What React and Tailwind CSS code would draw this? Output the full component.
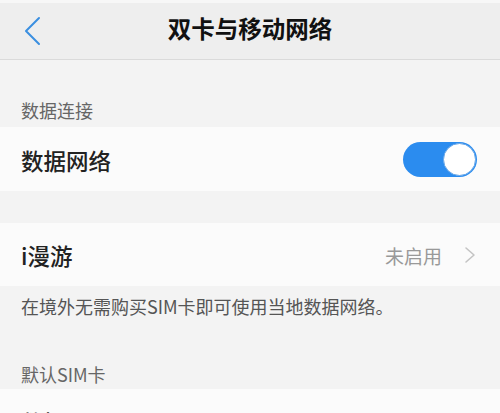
export default function App() {
  const font = { fontFamily: '"Noto Sans CJK SC", "Noto Sans", sans-serif' };
  return (
    <div className="w-[500px] h-[413px] overflow-hidden bg-[#f3f3f3]" style={font}>
      <div className="h-[3px] bg-[#f7f7f7]" />
      <header className="relative h-[57px] bg-[#eeeeee] border-b border-[#dadada] flex items-center justify-center pb-[4px]">
        <svg className="absolute left-[24px] top-[13px]" width="18" height="30" viewBox="0 0 18 30" fill="none">
          <polyline points="15,2 2,15 15,28" stroke="#3b8fe0" strokeWidth="2" strokeLinecap="round" strokeLinejoin="round" />
        </svg>
        <h1 className="text-[23.5px] font-bold text-[#111] leading-none">双卡与移动网络</h1>
      </header>

      <div className="h-[67px] flex items-end pb-[8px] px-[21px]">
        <span className="text-[18px] leading-[18px] text-[#666]">数据连接</span>
      </div>

      <div className="h-[64px] bg-[#fbfbfb] flex items-center justify-between pl-[21px] pr-[23px]">
        <span className="text-[22.5px] leading-none font-medium text-[#222] pt-[2px]">数据网络</span>
        <div className="relative w-[74px] h-[35px] rounded-full bg-[#2b8cef]">
          <div className="absolute right-[1px] top-[1px] w-[33px] h-[33px] rounded-full bg-white border border-[#6aa8e8]" />
        </div>
      </div>

      <div className="h-[32px]" />

      <div className="h-[63px] bg-[#fbfbfb] flex items-center justify-between pl-[21px] pr-[24px]">
        <span className="text-[22.5px] leading-none font-medium text-[#222] pt-[2px]">i漫游</span>
        <div className="flex items-center gap-[22px]">
          <span className="text-[19px] leading-none text-[#999] pt-[2px]">未启用</span>
          <svg width="12" height="18" viewBox="0 0 12 18" fill="none">
            <polyline points="2,2 10,9 2,16" stroke="#c4c4c4" strokeWidth="1.6" strokeLinecap="round" strokeLinejoin="round" />
          </svg>
        </div>
      </div>

      <div className="px-[21px] pt-[11px] pb-[6px]">
        <p className="text-[18px] leading-[18px] text-[#555]">在境外无需购买SIM卡即可使用当地数据网络。</p>
        <p className="mt-[50px] text-[18px] leading-[18px] text-[#666]">默认SIM卡</p>
      </div>

      <div className="h-[64px] bg-[#fbfbfb] flex items-center pl-[21px]">
        <span className="text-[22.5px] leading-none font-medium text-[#222] pt-[2px]">数据</span>
      </div>
    </div>
  );
}
